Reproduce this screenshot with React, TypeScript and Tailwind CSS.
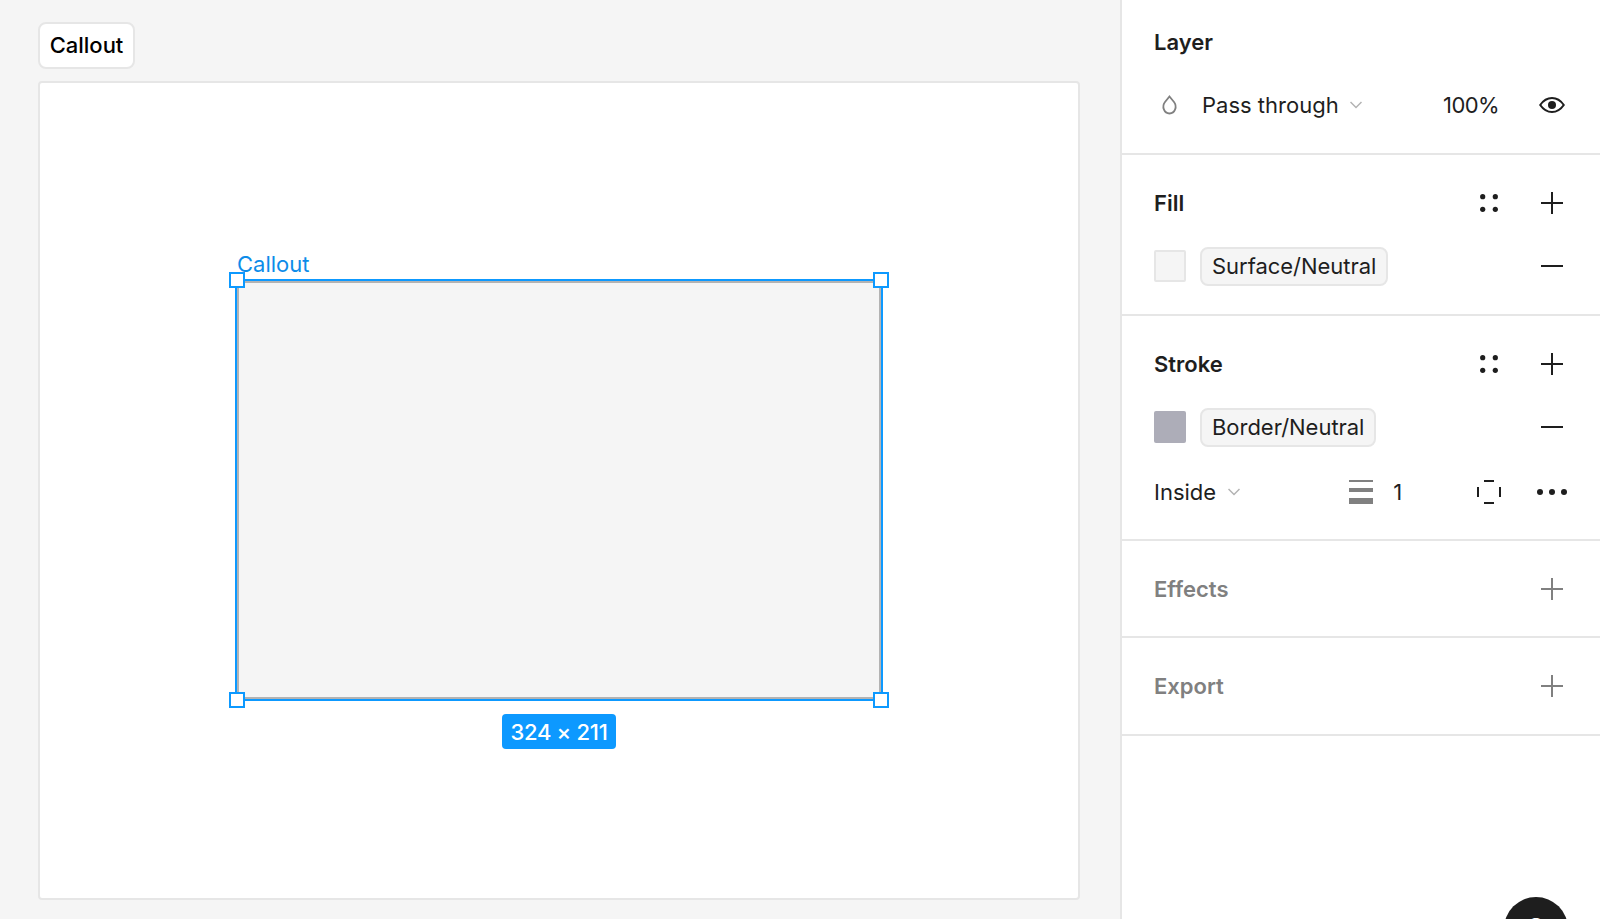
import type { ReactNode } from 'react';

function Plus({ muted = false }: { muted?: boolean }) {
    return (
        <svg width="24" height="24" viewBox="0 0 24 24" className={muted ? 'text-[#808080]' : 'text-[#1e1e1e]'}>
            <path d="M12 1v22M1 12h22" stroke="currentColor" strokeWidth="2" />
        </svg>
    );
}

function Minus() {
    return (
        <svg width="24" height="24" viewBox="0 0 24 24" className="text-[#1e1e1e]">
            <path d="M1 12h22" stroke="currentColor" strokeWidth="2" />
        </svg>
    );
}

function Dots() {
    return (
        <svg width="18" height="18" viewBox="0 0 18 18" className="translate-x-px text-[#1e1e1e]">
            <circle cx="2.700" cy="2.700" r="2.600" fill="currentColor" />
            <circle cx="15.300" cy="2.700" r="2.600" fill="currentColor" />
            <circle cx="2.700" cy="15.300" r="2.600" fill="currentColor" />
            <circle cx="15.300" cy="15.300" r="2.600" fill="currentColor" />
        </svg>
    );
}

function Chevron() {
    return (
        <svg width="12" height="8" viewBox="0 0 12 8" className="text-[#b3b3b3]">
            <path d="M0.500 1l5.500 5.500L11.500 1" fill="none" stroke="currentColor" strokeWidth="1.500" />
        </svg>
    );
}

function IconSlot({ children }: { children: ReactNode }) {
    return <div className="flex h-16 w-16 shrink-0 items-center justify-center">{children}</div>;
}

function Header({ title, muted = false, styles = false }: { title: string; muted?: boolean; styles?: boolean }) {
    return (
        <div className="flex h-16 items-center justify-between pl-8 pr-4">
            <span className={`text-[22px] font-semibold ${muted ? 'text-[#808080]' : 'text-[#1e1e1e]'}`}>{title}</span>
            <div className="flex">
                {styles && <IconSlot><Dots /></IconSlot>}
                <IconSlot><Plus muted={muted} /></IconSlot>
            </div>
        </div>
    );
}

function StyleRow({ swatch, label }: { swatch: string; label: string }) {
    return (
        <div className="-mt-px flex h-16 items-center justify-between pl-8 pr-4">
            <div className="flex items-center gap-[14px]">
                <div className={`h-8 w-8 rounded-[2px] ${swatch}`} />
                <div className="flex h-[39px] items-center rounded-lg border-2 border-[#e6e6e6] bg-[#f5f5f5] px-[10px] text-[22px] tracking-[-0.03px] text-[#1e1e1e]">
                    {label}
                </div>
            </div>
            <IconSlot><Minus /></IconSlot>
        </div>
    );
}

function Handle({ className }: { className: string }) {
    return <div className={`absolute h-4 w-4 border-2 border-[#0d99ff] bg-white ${className}`} />;
}

function Canvas() {
    return (
        <main className="flex w-[1120px] shrink-0 flex-col pb-[19px] pl-[38px] pr-10 pt-[22px]">
            <div className="flex h-[47px] w-[97px] items-center justify-center rounded-lg border-2 border-[#e6e6e6] bg-white text-[22px] font-medium text-black">
                Callout
            </div>
            <div className="mt-3 flex flex-1 items-center justify-center rounded border-2 border-[#e6e6e6] bg-white">
                <div className="relative mb-px h-[422px] w-[648px] border-2 border-[#0d99ff] bg-[#f5f5f5] shadow-[inset_0_0_0_2px_#b3b3b3]">
                    <span className="absolute bottom-full left-0 mb-[3px] text-[22px] leading-[28px] text-[#0c8ce9]">Callout</span>
                    <Handle className="-left-2 -top-[9px]" />
                    <Handle className="-right-2 -top-[9px]" />
                    <Handle className="-bottom-[9px] -left-2" />
                    <Handle className="-bottom-[9px] -right-2" />
                    <div className="absolute left-1/2 top-full mt-[15px] flex h-[35px] w-[114px] -translate-x-1/2 items-center justify-center rounded bg-[#0d99ff] pt-px text-[22px] font-medium tracking-[-0.3px] text-white">
                        324 × 211
                    </div>
                </div>
            </div>
        </main>
    );
}

function Panel() {
    return (
        <aside className="relative h-full flex-1 overflow-hidden border-l-2 border-[#e6e6e6] bg-white">
            <section className="h-[155px] border-b-2 border-[#e6e6e6] pt-[10px]">
                <div className="flex h-16 items-center pl-8 text-[22px] font-semibold text-[#1e1e1e]">Layer</div>
                <div className="flex h-[62px] items-center pl-8 pr-4 text-[22px] text-[#1e1e1e]">
                    <svg width="17" height="20" viewBox="0 0 16 20" className="ml-[7px] text-[#808080]">
                        <path d="M8 1.500l4.500 5.500c3.500 4.500 1 11.500-4.500 11.500S0 11.500 3.500 7z" fill="none" stroke="currentColor" strokeWidth="1.800" />
                    </svg>
                    <span className="ml-6">Pass through</span>
                    <span className="ml-[11px]"><Chevron /></span>
                    <span className="ml-auto mr-[21px] tracking-[-0.6px]">100%</span>
                    <IconSlot>
                        <svg width="26" height="16" viewBox="0 0 26 16" className="text-[#1e1e1e]">
                            <path d="M1.200 8C4.500 3.200 8.500 1 13 1s8.500 2.200 11.800 7C21.500 12.800 17.500 15 13 15S4.500 12.800 1.200 8z" fill="none" stroke="currentColor" strokeWidth="2" />
                            <circle cx="13" cy="8" r="4" fill="currentColor" />
                        </svg>
                    </IconSlot>
                </div>
            </section>

            <section className="h-[161px] border-b-2 border-[#e6e6e6] pt-4">
                <Header title="Fill" styles />
                <StyleRow swatch="border-2 border-[#e6e6e6] bg-[#f5f5f5]" label="Surface/Neutral" />
            </section>

            <section className="h-[225px] border-b-2 border-[#e6e6e6] pt-4">
                <Header title="Stroke" styles />
                <StyleRow swatch="bg-[#adadb8]" label="Border/Neutral" />
                <div className="mt-px flex h-16 items-center pl-8 pr-4 text-[22px] text-[#1e1e1e]">
                    <span>Inside</span>
                    <span className="ml-3"><Chevron /></span>
                    <svg width="24" height="24" viewBox="0 0 24 24" className="ml-[109px] text-[#808080]">
                        <rect x="0" y="0" width="24" height="2" fill="currentColor" />
                        <rect x="0" y="8" width="24" height="4" fill="currentColor" />
                        <rect x="0" y="18" width="24" height="6" fill="currentColor" />
                    </svg>
                    <span className="ml-5">1</span>
                    <div className="ml-auto flex">
                        <IconSlot>
                            <svg width="24" height="24" viewBox="0 0 24 24" className="translate-x-px text-[#1e1e1e]">
                                <path d="M7 1h10M7 23h10M1 7v10M23 7v10" stroke="currentColor" strokeWidth="2" />
                            </svg>
                        </IconSlot>
                        <IconSlot>
                            <svg width="30" height="6" viewBox="0 0 30 6" className="text-[#1e1e1e]">
                                <circle cx="3" cy="3" r="3" fill="currentColor" />
                                <circle cx="15" cy="3" r="3" fill="currentColor" />
                                <circle cx="27" cy="3" r="3" fill="currentColor" />
                            </svg>
                        </IconSlot>
                    </div>
                </div>
            </section>

            <section className="h-[97px] border-b-2 border-[#e6e6e6] pt-4">
                <Header title="Effects" muted />
            </section>
            <section className="h-[98px] border-b-2 border-[#e6e6e6] pt-4">
                <Header title="Export" muted />
            </section>

            <div className="absolute left-[382px] top-[897px] flex h-16 w-16 justify-center rounded-full bg-[#1e1e1e] pt-[18px] text-[32px] font-medium leading-none text-white">
                ?
            </div>
        </aside>
    );
}

export default function App() {
    return (
        <div className="flex h-[919px] w-[1600px] overflow-hidden bg-[#f5f5f5] font-['Inter',sans-serif]">
            <Canvas />
            <Panel />
        </div>
    );
}
